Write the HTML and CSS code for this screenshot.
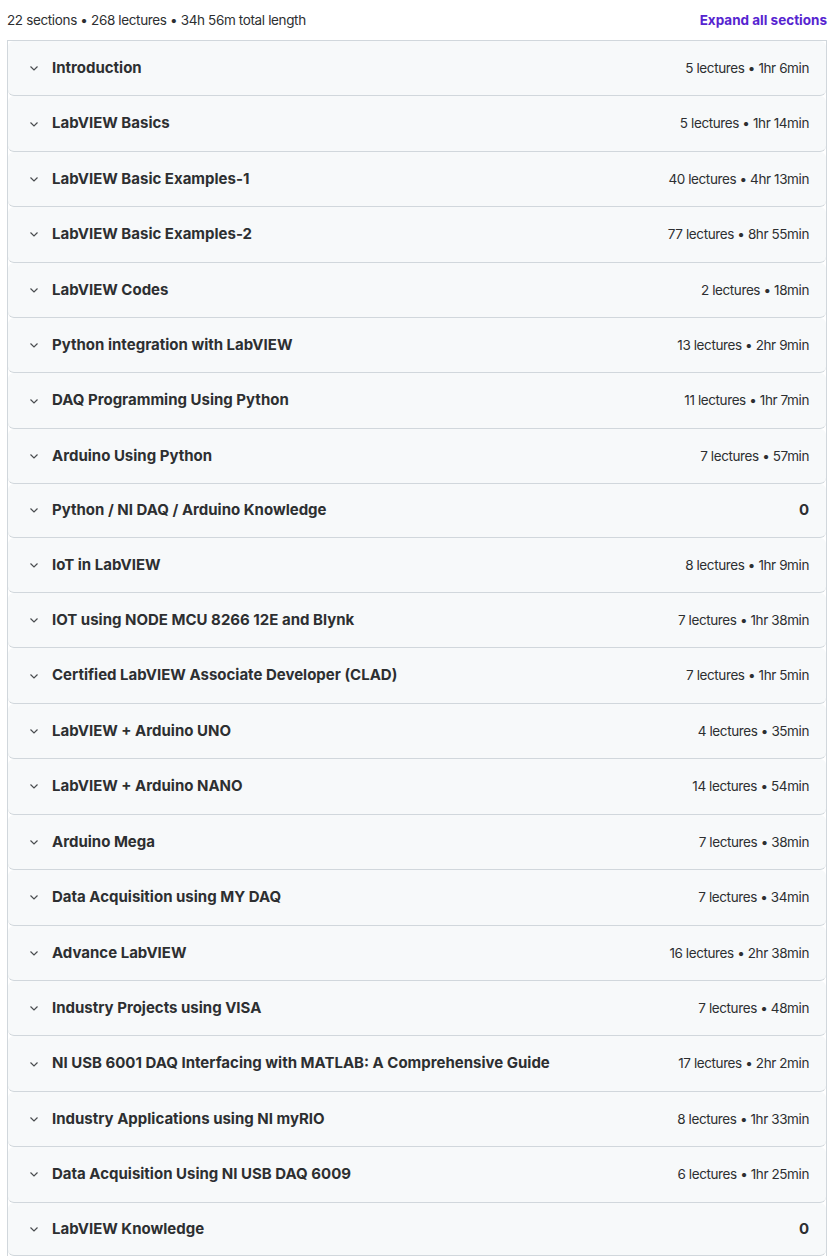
FILE: index.html
```html
<!DOCTYPE html>
<html lang="en">
<head>
  <meta charset="UTF-8" />
  <meta name="viewport" content="width=device-width, initial-scale=1.0" />
  <title>Course content</title>
  <link rel="stylesheet" href="styles.css">
</head>
<body>
  <div class="curriculum">
    <div class="curriculum-head">
      <span class="summary">22 sections • 268 lectures • 34h 56m total length</span>
      <button class="expand-all">Expand all sections</button>
    </div>

    <div class="sections" id="sections"></div>
  </div>

  <script>
    const sections = [
      ["Introduction", "5 lectures • 1hr 6min"],
      ["LabVIEW Basics", "5 lectures • 1hr 14min"],
      ["LabVIEW Basic Examples-1", "40 lectures • 4hr 13min"],
      ["LabVIEW Basic Examples-2", "77 lectures • 8hr 55min"],
      ["LabVIEW Codes", "2 lectures • 18min"],
      ["Python integration with LabVIEW", "13 lectures • 2hr 9min"],
      ["DAQ Programming Using Python", "11 lectures • 1hr 7min"],
      ["Arduino Using Python", "7 lectures • 57min"],
      ["Python / NI DAQ / Arduino Knowledge", "0"],
      ["IoT in LabVIEW", "8 lectures • 1hr 9min"],
      ["IOT using NODE MCU 8266 12E and Blynk", "7 lectures • 1hr 38min"],
      ["Certified LabVIEW Associate Developer (CLAD)", "7 lectures • 1hr 5min"],
      ["LabVIEW + Arduino UNO", "4 lectures • 35min"],
      ["LabVIEW + Arduino NANO", "14 lectures • 54min"],
      ["Arduino Mega", "7 lectures • 38min"],
      ["Data Acquisition using MY DAQ", "7 lectures • 34min"],
      ["Advance LabVIEW", "16 lectures • 2hr 38min"],
      ["Industry Projects using VISA", "7 lectures • 48min"],
      ["NI USB 6001 DAQ Interfacing with MATLAB: A Comprehensive Guide", "17 lectures • 2hr 2min"],
      ["Industry Applications using NI myRIO", "8 lectures • 1hr 33min"],
      ["Data Acquisition Using NI USB DAQ 6009", "6 lectures • 1hr 25min"],
      ["LabVIEW Knowledge", "0"]
    ];

    const chevron = '<svg class="chevron" viewBox="0 0 12 12" width="12" height="12">' +
      '<path d="M2.5 4.5 L6 8 L9.5 4.5" fill="none" stroke="currentColor" stroke-width="1.2"/></svg>';

    document.getElementById("sections").innerHTML = sections.map(([title, meta]) => `
      <div class="section${meta === "0" ? " empty" : ""}">
        <div class="section-title">${chevron}<span>${title}</span></div>
        <span class="section-meta">${meta}</span>
      </div>
    `).join("");
  </script>
</body>
</html>
```

FILE: styles.css
```css
body {
  margin: 0;
  padding: 0 4px 0 7px;
  font-family: Inter, 'Noto Sans', sans-serif;
  color: #2d2f31;
  background: #fff;
}
.curriculum-head {
  display: flex;
  align-items: center;
  justify-content: space-between;
  height: 40px;
}
.summary {
  font-size: 13.5px;
  letter-spacing: -0.36px;
}
.expand-all {
  border: none;
  background: none;
  padding: 0;
  font-family: inherit;
  font-size: 13.5px;
  font-weight: 700;
  color: #5624d0;
}
.sections {
  border: 1px solid #d1d7dc;
  border-bottom: none;
}
.section {
  display: flex;
  align-items: center;
  justify-content: space-between;
  padding: 16px 17px 16px 20px;
  line-height: 22.4px;
  background: #f7f9fa;
  border-bottom: 1px solid #d1d7dc;
  border-radius: 6px;
}
.section.empty {
  padding: 15px 17px 15px 20px;
}
.section-title {
  display: flex;
  align-items: center;
  gap: 12px;
  font-size: 15px;
  font-weight: 700;
  letter-spacing: 0;
}
.chevron {
  flex: none;
  color: #4a4d50;
}
.section-meta {
  font-size: 13.5px;
  letter-spacing: -0.4px;
}
.empty .section-meta {
  font-weight: 700;
  font-size: 15px;
  letter-spacing: 0;
}
```
